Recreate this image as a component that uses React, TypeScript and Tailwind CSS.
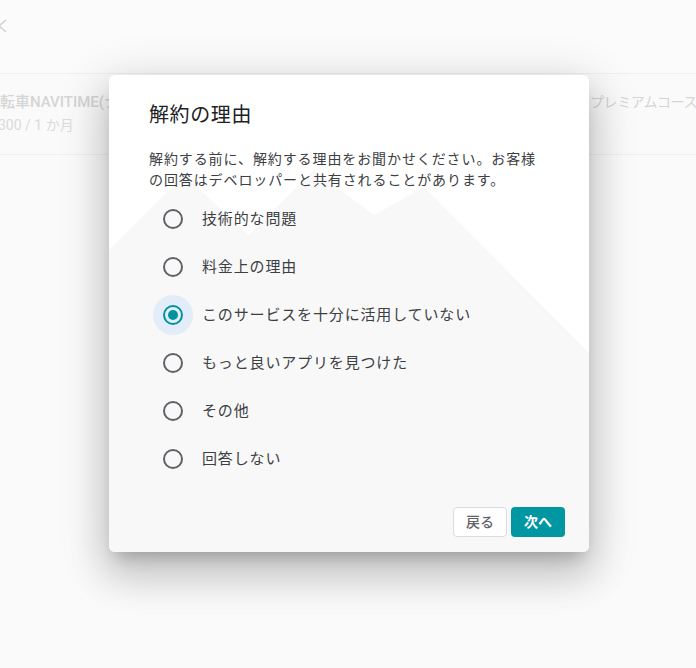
import React, { useState } from "react";

const options = [
  "技術的な問題",
  "料金上の理由",
  "このサービスを十分に活用していない",
  "もっと良いアプリを見つけた",
  "その他",
  "回答しない",
];

function Radio({ checked }: { checked: boolean }) {
  return (
    <div
      className={`w-[40px] h-[40px] rounded-full flex items-center justify-center ${
        checked ? "bg-[#e3edf9]" : ""
      }`}
    >
      <div
        className={`w-[20px] h-[20px] rounded-full border-2 flex items-center justify-center ${
          checked ? "border-[#00939f]" : "border-[#5f6368]"
        }`}
      >
        {checked && <div className="w-[10px] h-[10px] rounded-full bg-[#00939f]" />}
      </div>
    </div>
  );
}

export default function App() {
  const [sel, setSel] = useState(2);
  return (
    <div className="relative w-[696px] h-[668px] overflow-hidden bg-[#fafafa] font-['Roboto','Noto_Sans_CJK_JP',sans-serif]">
      {/* background page (dimmed) */}
      <div className="h-[74px] border-b border-[#f0f0f0] bg-[#fbfbfb] relative">
        <svg className="absolute left-[-6px] top-[18px]" width="16" height="16" viewBox="0 0 16 16">
          <path d="M12 2 L5 8 L12 14" stroke="#d4d4d4" strokeWidth="1.6" fill="none" />
        </svg>
      </div>
      <div className="h-[81px] border-b border-[#f0f0f0] flex">
        <div className="w-[124px] shrink-0 pt-[17px] ml-[-15px] overflow-hidden">
          <div className="text-[15px] leading-[22px] font-medium text-[#d5d5d5] whitespace-nowrap">
            自転車NAVITIME(ナビ
          </div>
          <div className="text-[14px] leading-[24px] text-[#dadada] whitespace-nowrap ml-[-1px]">
            ￥300 / 1 か月
          </div>
        </div>
        <div className="ml-[481px] w-[106px] shrink-0 overflow-hidden pt-[17px] text-[14px] leading-[22px] text-[#d5d5d5] whitespace-nowrap tracking-[-0.4px]">
          プレミアムコース
        </div>
      </div>

      {/* dialog */}
      <div className="absolute left-[109px] top-[75px] w-[480px] h-[477px] rounded-[6px] bg-white overflow-hidden shadow-[0_11px_15px_-7px_rgba(0,0,0,0.2),0_24px_38px_3px_rgba(0,0,0,0.14),0_9px_46px_8px_rgba(0,0,0,0.12)]">
        <svg className="absolute inset-0" width="480" height="477" viewBox="0 0 480 477">
          <polygon
            points="0,175 75,100 140,160 205,95 265,140 315,112 480,278 480,477 0,477"
            fill="#f8f8f8"
          />
        </svg>
        <div className="relative flex flex-col h-full pt-[25px] pb-[15px]">
          <div className="pl-[40px] text-[20px] leading-[30px] tracking-[0.6px] text-[#202124]">
            解約の理由
          </div>
          <p className="mt-[19px] pl-[40px] pr-[44px] text-[14px] leading-[21px] tracking-[0.9px] text-[#3c4043]">
            解約する前に、解約する理由をお聞かせください。お客様の回答はデベロッパーと共有されることがあります。
          </p>
          <div className="mt-[4px] flex flex-col">
            {options.map((o, i) => (
              <div
                key={o}
                className="h-[48px] flex items-center pl-[44px] cursor-pointer"
                onClick={() => setSel(i)}
              >
                <Radio checked={sel === i} />
                <span className="ml-[9px] text-[15px] tracking-[0.85px] text-[#3c4043]">{o}</span>
              </div>
            ))}
          </div>
          <div className="mt-auto flex justify-end gap-[4px] pr-[24px]">
            <button className="w-[54px] h-[30px] rounded-[4px] border border-[#dadce0] bg-white text-[14px] font-medium text-[#5f6368]">
              戻る
            </button>
            <button className="w-[54px] h-[30px] rounded-[4px] bg-[#0096a2] text-[14px] font-bold text-white">
              次へ
            </button>
          </div>
        </div>
      </div>
    </div>
  );
}
